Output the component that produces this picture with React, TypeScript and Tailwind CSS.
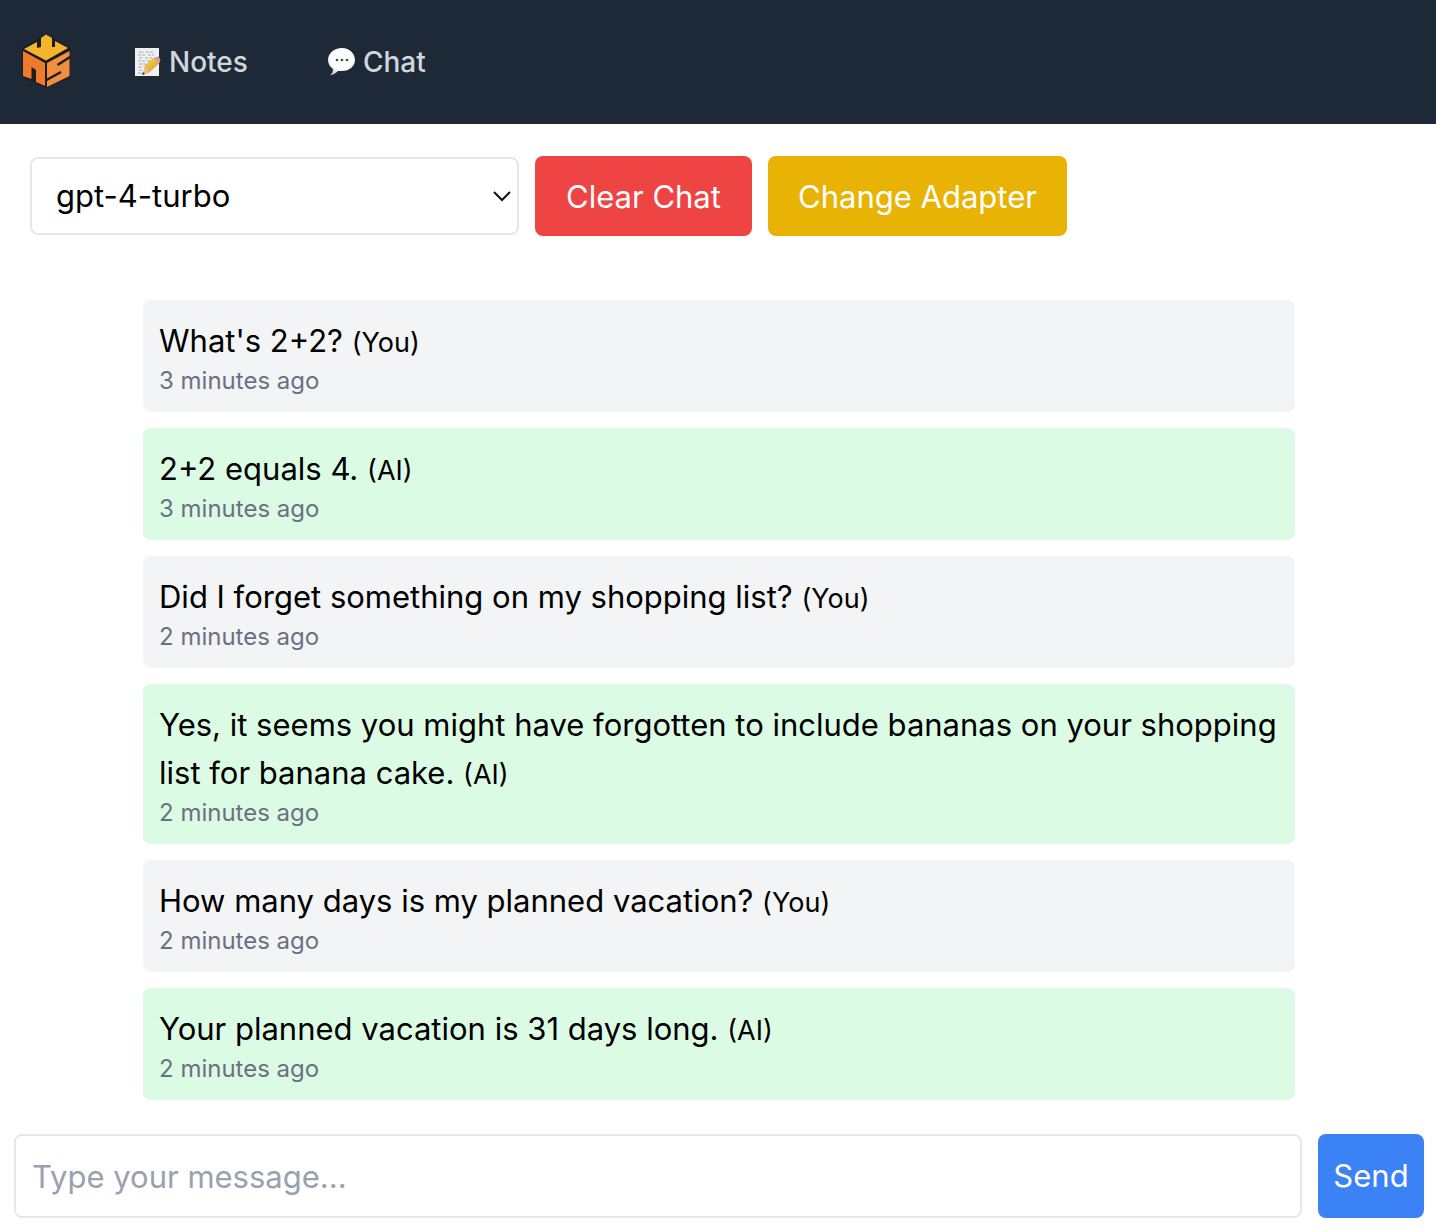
import {useState} from "react";
import type {FormEvent} from "react";

type Message = {
    id: number;
    author: "You" | "AI";
    text: string;
    time: string;
};

const models = ["gpt-4-turbo", "gpt-4", "gpt-3.5-turbo"];

const initialMessages: Message[] = [
    {id: 1, author: "You", text: "What's 2+2?", time: "3 minutes ago"},
    {id: 2, author: "AI", text: "2+2 equals 4.", time: "3 minutes ago"},
    {id: 3, author: "You", text: "Did I forget something on my shopping list?", time: "2 minutes ago"},
    {
        id: 4,
        author: "AI",
        text: "Yes, it seems you might have forgotten to include bananas on your shopping list for banana cake.",
        time: "2 minutes ago"
    },
    {id: 5, author: "You", text: "How many days is my planned vacation?", time: "2 minutes ago"},
    {id: 6, author: "AI", text: "Your planned vacation is 31 days long.", time: "2 minutes ago"}
];

function Logo() {
    return (
        <svg viewBox="0 0 60 64" className="h-16 w-15" role="img" aria-label="Home">
            <path d="M30 4 54 18V47L30 58 6 47V18Z" fill="#1b1c20" />
            <path d="M8 19 21 12V18L25 17V8L30 4.500 36 8V17L39 17V11L52 18 30 30.500Z" fill="#f5b52b" />
            <path d="M7 21 29 33V56L20 52V40L15.500 37V49L7 46Z" fill="#ef7a2c" />
            <path d="M31 33 53.500 21V46L31 57Z" fill="#f0903f" />
            <path d="M54 27 41.500 35M30.500 50 45 42" stroke="#1b1c20" strokeWidth="2.400" />
        </svg>
    );
}

function MemoIcon() {
    return (
        <svg viewBox="0 0 26 30" className="h-[30px] w-[26px]" aria-hidden="true">
            <defs>
                <linearGradient id="pencil" x1="0" y1="0" x2="1" y2="1">
                    <stop offset="0" stopColor="#ffd84a" />
                    <stop offset="1" stopColor="#e0941f" />
                </linearGradient>
            </defs>
            <path d="M0 1H24V29H0Z" fill="#eef0f1" />
            <path
                d="M4 5h5m2 0h8M3 8h8m2 0h6M4 11h4m2 0h7M3 14h7m2 0h3M4 17h7M3 20h5M4 23h4M3 26h5"
                stroke="#a3a8ac"
                strokeWidth="1"
                strokeDasharray="3 1"
            />
            <path d="m10 19 9-8 5 5-10 9-5 2Z" fill="url(#pencil)" stroke="#b9802a" strokeWidth=".5" />
            <path d="m20 11 1-1q2-1 3 0l1 2q1 1-1 4Z" fill="#de8e91" />
            <path d="m19 11 5 5 1-1-5-5Z" fill="#a8b2b8" />
            <path d="m10 19-3 9 7-3Z" fill="#e8c28d" />
            <path d="m8 25-1 3 3-1Z" fill="#343434" />
        </svg>
    );
}

function SpeechIcon() {
    return (
        <svg viewBox="0 0 28 30" className="h-[30px] w-7" aria-hidden="true">
            <defs>
                <radialGradient id="bubble" cx=".5" cy=".4" r=".6">
                    <stop offset=".65" stopColor="#ffffff" />
                    <stop offset="1" stopColor="#cbd0d2" />
                </radialGradient>
            </defs>
            <path
                d="M14 1C6 1 0 6 0 13c0 4 2 7 5 9 0 3-1 5-3 6 3 0 6-2 8-4h4c8 0 13-5 13-11S22 1 14 1Z"
                fill="url(#bubble)"
            />
            <circle cx="9" cy="13" r="1.300" fill="#444" />
            <circle cx="14" cy="13" r="1.300" fill="#444" />
            <circle cx="19" cy="13" r="1.300" fill="#444" />
        </svg>
    );
}

function Navbar() {
    return (
        <header className="flex h-[124px] items-center bg-[#1e2937] px-4">
            <a href="#home" className="shrink-0">
                <Logo />
            </a>
            <nav className="ml-[59px] flex items-center gap-20 text-[28px] leading-10 font-medium text-gray-300">
                <a href="#notes" className="flex items-center gap-2">
                    <MemoIcon />
                    Notes
                </a>
                <a href="#chat" className="flex items-center gap-[7px]">
                    <SpeechIcon />
                    Chat
                </a>
            </nav>
        </header>
    );
}

function MessageItem({message}: {message: Message}) {
    return (
        <li
            className={`rounded-lg px-4 pt-[17px] pb-[15px] ${message.author === "AI" ? "bg-[#dcfbe4]" : "bg-[#f3f4f6]"}`}
        >
            <p className="text-[31px] leading-[48px]">
                {message.text} <span className="text-[27px] leading-none">({message.author})</span>
            </p>
            <p className="text-2xl leading-8 text-gray-500">{message.time}</p>
        </li>
    );
}

export default function App() {
    const [model, setModel] = useState(models[0]);
    const [messages, setMessages] = useState(initialMessages);
    const [draft, setDraft] = useState("");

    const handleSubmit = (event: FormEvent) => {
        event.preventDefault();
        if (!draft.trim()) return;
        setMessages([...messages, {id: Date.now(), author: "You", text: draft, time: "just now"}]);
        setDraft("");
    };

    return (
        <div className="flex min-h-screen flex-col bg-white font-['Inter',sans-serif] text-black">
            <Navbar />
            <main className="flex grow flex-col pt-8 pr-3 pb-3 pl-3.5 text-[31px] leading-[48px]">
                <div className="flex flex-wrap items-center gap-4 pl-4">
                    <div className="relative">
                        <select
                            aria-label="Model"
                            value={model}
                            onChange={(event) => setModel(event.target.value)}
                            className="h-[78px] w-[489px] appearance-none rounded-lg border-2 border-gray-200 bg-white px-6"
                        >
                            {models.map((name) => (
                                <option key={name}>{name}</option>
                            ))}
                        </select>
                        <svg
                            viewBox="0 0 18 12"
                            className="pointer-events-none absolute top-1/2 right-2 h-3 w-[18px] -translate-y-1/2"
                            fill="none"
                            aria-hidden="true"
                        >
                            <path d="m1 2 8 8 8-8" stroke="#111" strokeWidth="2" />
                        </svg>
                    </div>
                    <button
                        type="button"
                        onClick={() => setMessages([])}
                        className="w-[217px] rounded-lg bg-[#ef4444] pt-[17px] pb-[15px] text-white"
                    >
                        Clear Chat
                    </button>
                    <button
                        type="button"
                        className="w-[299px] rounded-lg bg-[#e8b304] pt-[17px] pb-[15px] text-white"
                    >
                        Change Adapter
                    </button>
                </div>

                <ul className="mx-auto mt-16 mb-[34px] flex w-full max-w-6xl grow flex-col gap-4">
                    {messages.map((message) => (
                        <MessageItem key={message.id} message={message} />
                    ))}
                </ul>

                <form onSubmit={handleSubmit} className="flex gap-4">
                    <input
                        type="text"
                        aria-label="Message"
                        placeholder="Type your message..."
                        value={draft}
                        onChange={(event) => setDraft(event.target.value)}
                        className="h-[84px] min-w-0 grow rounded-lg border-2 border-gray-200 px-4 placeholder:text-gray-400"
                    />
                    <button type="submit" className="w-[106px] rounded-lg bg-[#3b82f6] text-white">
                        Send
                    </button>
                </form>
            </main>
        </div>
    );
}
